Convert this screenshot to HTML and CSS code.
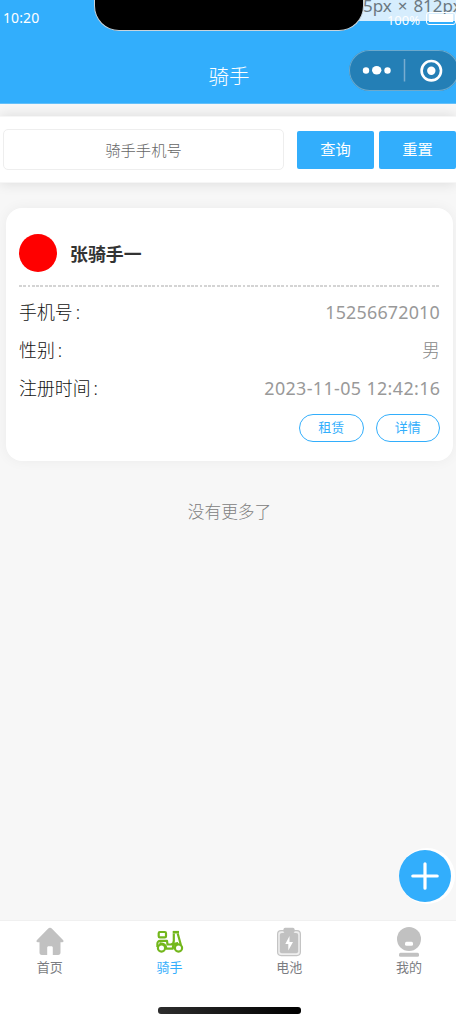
FILE: index.html
```html
<!DOCTYPE html>
<html lang="zh-CN">

<head>
  <meta charset="UTF-8">
  <meta name="viewport" content="width=device-width, initial-scale=1.0">
  <title>骑手</title>
  <link rel="stylesheet" href="styles.css">
</head>

<body>
  <div class="page">
    <header class="header">
      <div class="status-bar">
        <span class="time">10:20</span>
        <div class="battery-box">
          <span>100%</span>
          <i class="battery"></i>
        </div>
      </div>
      <div class="size-tip">5px × 812px</div>
      <div class="notch"></div>
      <h1 class="title">骑手</h1>
      <div class="capsule">
        <svg width="110" height="41" viewBox="0 0 110 41">
          <g fill="#fff">
            <circle cx="17" cy="20.500" r="3.200" />
            <ellipse cx="27.700" cy="20.200" rx="4.700" ry="4.200" />
            <circle cx="38.500" cy="20.500" r="3.200" />
            <circle cx="82.300" cy="20.700" r="4.200" />
          </g>
          <path d="M55.500 9v22.500" stroke="#78add0" stroke-width="1.500" />
          <circle cx="82.300" cy="20.700" r="9.700" fill="none" stroke="#fff" stroke-width="2.600" />
        </svg>
      </div>
    </header>

    <form class="search">
      <input type="text" class="search-input" placeholder="骑手手机号">
      <button type="button" class="btn">查询</button>
      <button type="button" class="btn">重置</button>
    </form>

    <main class="list">
      <div class="card">
        <div class="card-head">
          <div class="avatar"></div>
          <span class="name">张骑手一</span>
        </div>
        <div class="row">
          <span>手机号<i class="colon">:</i></span>
          <span class="value">15256672010</span>
        </div>
        <div class="row">
          <span>性别<i class="colon">:</i></span>
          <span class="value sex">男</span>
        </div>
        <div class="row">
          <span>注册时间<i class="colon">:</i></span>
          <span class="value date">2023-11-05 12:42:16</span>
        </div>
        <div class="actions">
          <button type="button" class="tag">租赁</button>
          <button type="button" class="tag">详情</button>
        </div>
      </div>
      <p class="no-more">没有更多了</p>
    </main>

    <button type="button" class="add" aria-label="添加">
      <svg width="28" height="28" viewBox="0 0 28 28">
        <path d="M14 1.800v24.400M1.800 14h24.400" stroke="#fff" stroke-width="3.200" stroke-linecap="round" />
      </svg>
    </button>

    <nav class="tabbar">
      <a class="tab">
        <svg width="30" height="30" viewBox="0 0 30 30">
          <path d="M15 .8c-.8 0-1.400.3-2 .9L2 13c-1 1.100-.6 2.200.8 2.200h1.700V25.500c0 1.600.8 2.400 2.400 2.400h5.300v-7.100c0-1 .5-1.500 1.500-1.500h2.600c1 0 1.500.5 1.500 1.500v7.100h5.300c1.600 0 2.400-.8 2.400-2.400V15.200h1.700c1.400 0 1.800-1.100.8-2.200L17 1.700c-.6-.6-1.200-.9-2-.9z" fill="#c1c1c1" />
        </svg>
        <span>首页</span>
      </a>
      <a class="tab active">
        <svg width="30" height="30" viewBox="0 0 30 30" fill="none" stroke="#73b71c" stroke-width="2.200" stroke-linejoin="round">
          <rect x="3.700" y="5" width="7.300" height="5.400" rx="1.200" />
          <path d="M17.700 5.200h6.300" stroke-width="2.600" />
          <path d="M18.800 6.500v7.300c0 2.700-1.200 3.700-3.200 3.700h-3.100l-.5-3.700H5.200c-1.700 0-2.800 1.200-2.800 3v3.200M22.700 6.500l3.200 11.500M4.500 16.500c4-.3 6.300 1.400 7 5.200h6.300c0-3.300 2-5.500 5.300-5.600" />
          <circle cx="6.500" cy="21" r="3.600" fill="#fff" />
          <circle cx="23.500" cy="21" r="3.600" fill="#fff" />
        </svg>
        <span>骑手</span>
      </a>
      <a class="tab">
        <svg width="30" height="30" viewBox="0 0 30 30">
          <rect x="3.600" y="3.600" width="22.800" height="25" rx="3.500" fill="#eee" stroke="#c4c4c4" stroke-width="1.200" />
          <rect x="5.800" y="6" width="18.400" height="20.200" rx="2" fill="#c1c1c1" />
          <rect x="9.500" y=".8" width="11" height="5.200" rx="1.500" fill="#c1c1c1" />
          <path d="M15.500 9l-4.200 8h3v6.500l4.700-8.500h-3.500z" fill="#fff" />
        </svg>
        <span>电池</span>
      </a>
      <a class="tab">
        <svg width="30" height="30" viewBox="0 0 30 30">
          <circle cx="15" cy="12" r="12" fill="#c1c1c1" />
          <rect x="11" y="14.800" width="8" height="4" rx="1.500" fill="#fff" />
          <rect x="5" y="25.800" width="20" height="4" rx="1.500" fill="#c1c1c1" />
        </svg>
        <span>我的</span>
      </a>
      <div class="home-bar"></div>
    </nav>
  </div>
</body>

</html>
```

FILE: styles.css
```css
* {
  box-sizing: border-box;
}

body {
  margin: 0;
  font-family: "Noto Sans", "Noto Sans CJK SC", sans-serif;
  background-color: #f7f7f7;
}

button {
  font-family: inherit;
  padding: 0;
  border: none;
}

.page {
  position: relative;
  display: flex;
  flex-direction: column;
  height: 1015px;
  overflow: hidden;
}

.header {
  position: relative;
  height: 104px;
  background-color: #32aefc;
  color: #fff;
  border-bottom: 1px solid #63c0fa;
}

.status-bar {
  position: relative;
  z-index: 2;
  display: flex;
  justify-content: space-between;
  height: 28px;
  padding: 8px 0 0 3px;
  font-size: 14px;
  line-height: 20px;
}

.time {
  letter-spacing: 0.1px;
}

.battery-box {
  display: flex;
  align-items: center;
  gap: 6px;
  padding-top: 3px;
  font-size: 13px;
}

.battery {
  width: 30px;
  height: 13px;
  margin-top: -3px;
  padding: 1px 2px 2px;
  border: 1px solid #fff;
  border-radius: 3px;
  background-color: #fff;
  background-clip: content-box;
}

.size-tip {
  position: absolute;
  top: 0;
  left: 358px;
  width: 98px;
  height: 21px;
  padding-left: 5px;
  overflow: hidden;
  background-color: #d6edfd;
  color: #6b7881;
  font-size: 17px;
  line-height: 12px;
  word-spacing: 1.500px;
  white-space: nowrap;
}

.notch {
  position: absolute;
  top: 0;
  left: 94px;
  width: 270px;
  height: 31px;
  background-color: #000;
  border: 1px solid #c8d4dc;
  border-top: none;
  border-radius: 0 0 25px 25px;
}

.title {
  margin: 36px 0 0;
  padding-left: 2px;
  font-size: 20.500px;
  font-weight: 300;
  line-height: 25px;
  text-align: center;
}

.capsule {
  position: absolute;
  top: 50px;
  left: 349px;
  width: 110px;
  height: 41px;
  background-color: #247fb6;
  border-radius: 21px;
  box-shadow: inset 0 0 0 1px #6ba9cd;
}

.capsule svg {
  display: block;
}

.search {
  display: flex;
  align-items: center;
  height: 67px;
  margin-top: 12px;
  padding-left: 3px;
  background-color: #fff;
  border: 1px solid #f6f6f6;
  border-width: 1px 0;
  box-shadow: 0 0 13px rgba(0, 0, 0, 0.12);
}

.search-input {
  flex: none;
  width: 281px;
  height: 41px;
  margin-right: 13px;
  padding: 0;
  border: 1px solid #eee;
  border-radius: 5px;
  font-family: inherit;
  font-size: 15.300px;
  font-weight: 300;
  text-align: center;
}

.search-input::placeholder {
  color: #666;
}

.btn {
  flex: none;
  width: 77px;
  height: 38px;
  margin-right: 5px;
  padding-bottom: 3px;
  background-color: #32aefc;
  border-radius: 2px;
  color: #fff;
  font-size: 15.300px;
}

.list {
  flex: 1;
  padding: 25px 3px 0 6px;
}

.card {
  height: 253px;
  padding: 13px;
  background-color: #fff;
  border-radius: 16px;
  box-shadow: 0 0 13px rgba(0, 0, 0, 0.05);
}

.card-head {
  display: flex;
  align-items: center;
  height: 66px;
  margin-bottom: 6px;
  padding-bottom: 2px;
  background: repeating-linear-gradient(90deg, #d4d4d4 0 2.800px, #fff 2.800px 4.300px) left bottom / 100% 2px no-repeat;
}

.avatar {
  width: 38px;
  height: 38px;
  margin-right: 13px;
  border-radius: 50%;
  background-color: #f00;
}

.name {
  color: #333;
  font-size: 17.900px;
  font-weight: 700;
}

.row {
  display: flex;
  justify-content: space-between;
  color: #111;
  font-size: 17.900px;
  font-weight: 300;
  line-height: 38px;
}

.colon {
  padding-left: 3px;
  font-style: normal;
}

.value {
  color: #999;
  font-weight: 400;
  letter-spacing: 0.200px;
}

.sex {
  color: #888;
  font-weight: 300;
}

.date {
  letter-spacing: 0.370px;
  margin-right: -0.370px;
}

.actions {
  display: flex;
  justify-content: flex-end;
  gap: 12px;
  margin-top: 7px;
}

.tag {
  width: 64.500px;
  height: 28px;
  padding-bottom: 3px;
  border: 1px solid #32aefc;
  border-radius: 14px;
  background-color: #fff;
  color: #32aefc;
  font-size: 13px;
}

.no-more {
  margin: 38px 0 0;
  color: #808080;
  font-size: 16.700px;
  font-weight: 300;
  line-height: 26px;
  text-align: center;
}

.add {
  position: absolute;
  top: 850px;
  left: 399px;
  display: flex;
  align-items: center;
  justify-content: center;
  width: 52px;
  height: 52px;
  border-radius: 50%;
  background-color: #32aefc;
  box-shadow: 2px 0 0 2px #fff;
}

.tabbar {
  position: relative;
  display: flex;
  height: 95px;
  padding-top: 6px;
  margin: 0 -13px 0 -10px;
  background-color: #fff;
  border-top: 1px solid #f0f0f0;
}

.tab {
  display: flex;
  flex: 1;
  flex-direction: column;
  align-items: center;
  color: #7b7d82;
  font-size: 13px;
  line-height: 21px;
}

.tab.active {
  color: #32aefc;
}

.home-bar {
  position: absolute;
  top: 86px;
  left: 168px;
  width: 143px;
  height: 7px;
  border-radius: 3px;
  background: linear-gradient(90deg, #2d2d2d, #000);
}
```
